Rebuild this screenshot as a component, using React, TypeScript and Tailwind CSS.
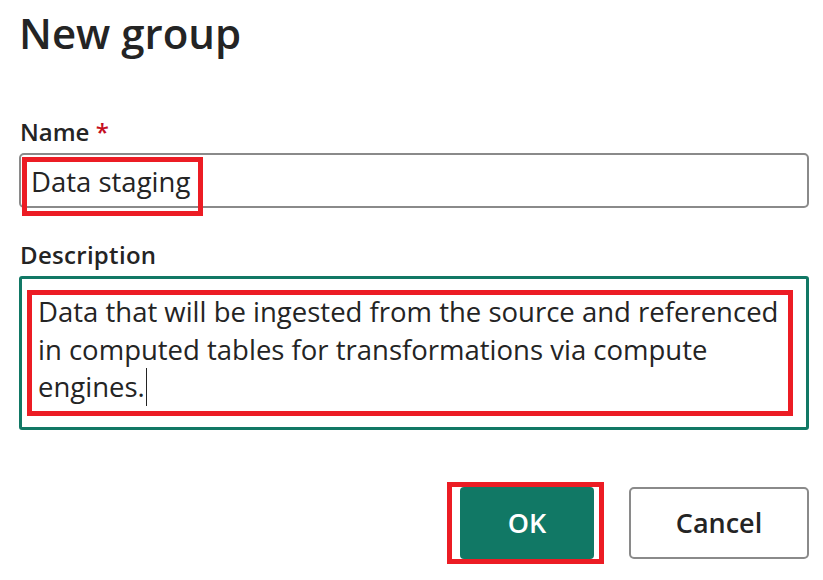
import React from 'react';

const font = { fontFamily: '"Open Sans", "Noto Sans", Arial, sans-serif' };

export default function App() {
  return (
    <div className="relative w-[823px] h-[580px] bg-white text-[#242424] overflow-hidden" style={font}>
      <div className="flex flex-col pl-[19px] pr-[14px]">
        {/* Title */}
        <h1 className="mt-[11px] text-[42px] leading-[43px] font-semibold">New group</h1>

        {/* Name field */}
        <label className="mt-[66px] pl-[1px] text-[24px] leading-[24px] font-semibold">
          Name <span className="text-[#c50f1f]">*</span>
        </label>
        <div className="relative mt-[9px] h-[55px] w-[790px] rounded-[5px] border-2 border-[#8a8a8a] flex items-center pl-[10px]">
          <span className="text-[27.5px] leading-[30px] mt-[2px]">Data staging</span>
          <div className="absolute left-[1px] top-[2px] w-[181px] h-[59px] border-[5px] border-[#ec1c24]" />
        </div>

        {/* Description field */}
        <label className="mt-[35px] pl-[1px] text-[24px] leading-[24px] font-semibold tracking-[0.3px]">Description</label>
        <div className="relative mt-[9px] h-[154px] w-[790px] rounded-[3px] border-[3px] border-[#117865] pl-[16px] pt-[14px]">
          <div className="text-[27.5px] leading-[37.5px] whitespace-nowrap">
            <div>Data that will be ingested from the source and referenced</div>
            <div>in computed tables for transformations via compute</div>
            <div className="flex items-center">
              engines.<span className="inline-block w-px h-[38px] bg-[#242424] ml-[1px]" />
            </div>
          </div>
          <div className="absolute left-[5px] top-[11px] w-[766px] h-[126px] border-[5px] border-[#ec1c24]" />
        </div>

        {/* Buttons */}
        <div className="mt-[57px] flex justify-end gap-[35px] w-[790px]">
          <div className="relative">
            <button className="w-[134px] h-[72px] rounded-[4px] bg-[#117865] text-white text-[27px] font-semibold">OK</button>
            <div className="absolute left-[-13px] top-[-5px] w-[157px] h-[82px] border-[5px] border-[#ec1c24]" />
          </div>
          <button className="w-[180px] h-[72px] rounded-[5px] border-2 border-[#8a8a8a] bg-white text-[27px] font-semibold text-[#242424]">
            Cancel
          </button>
        </div>
      </div>
    </div>
  );
}
